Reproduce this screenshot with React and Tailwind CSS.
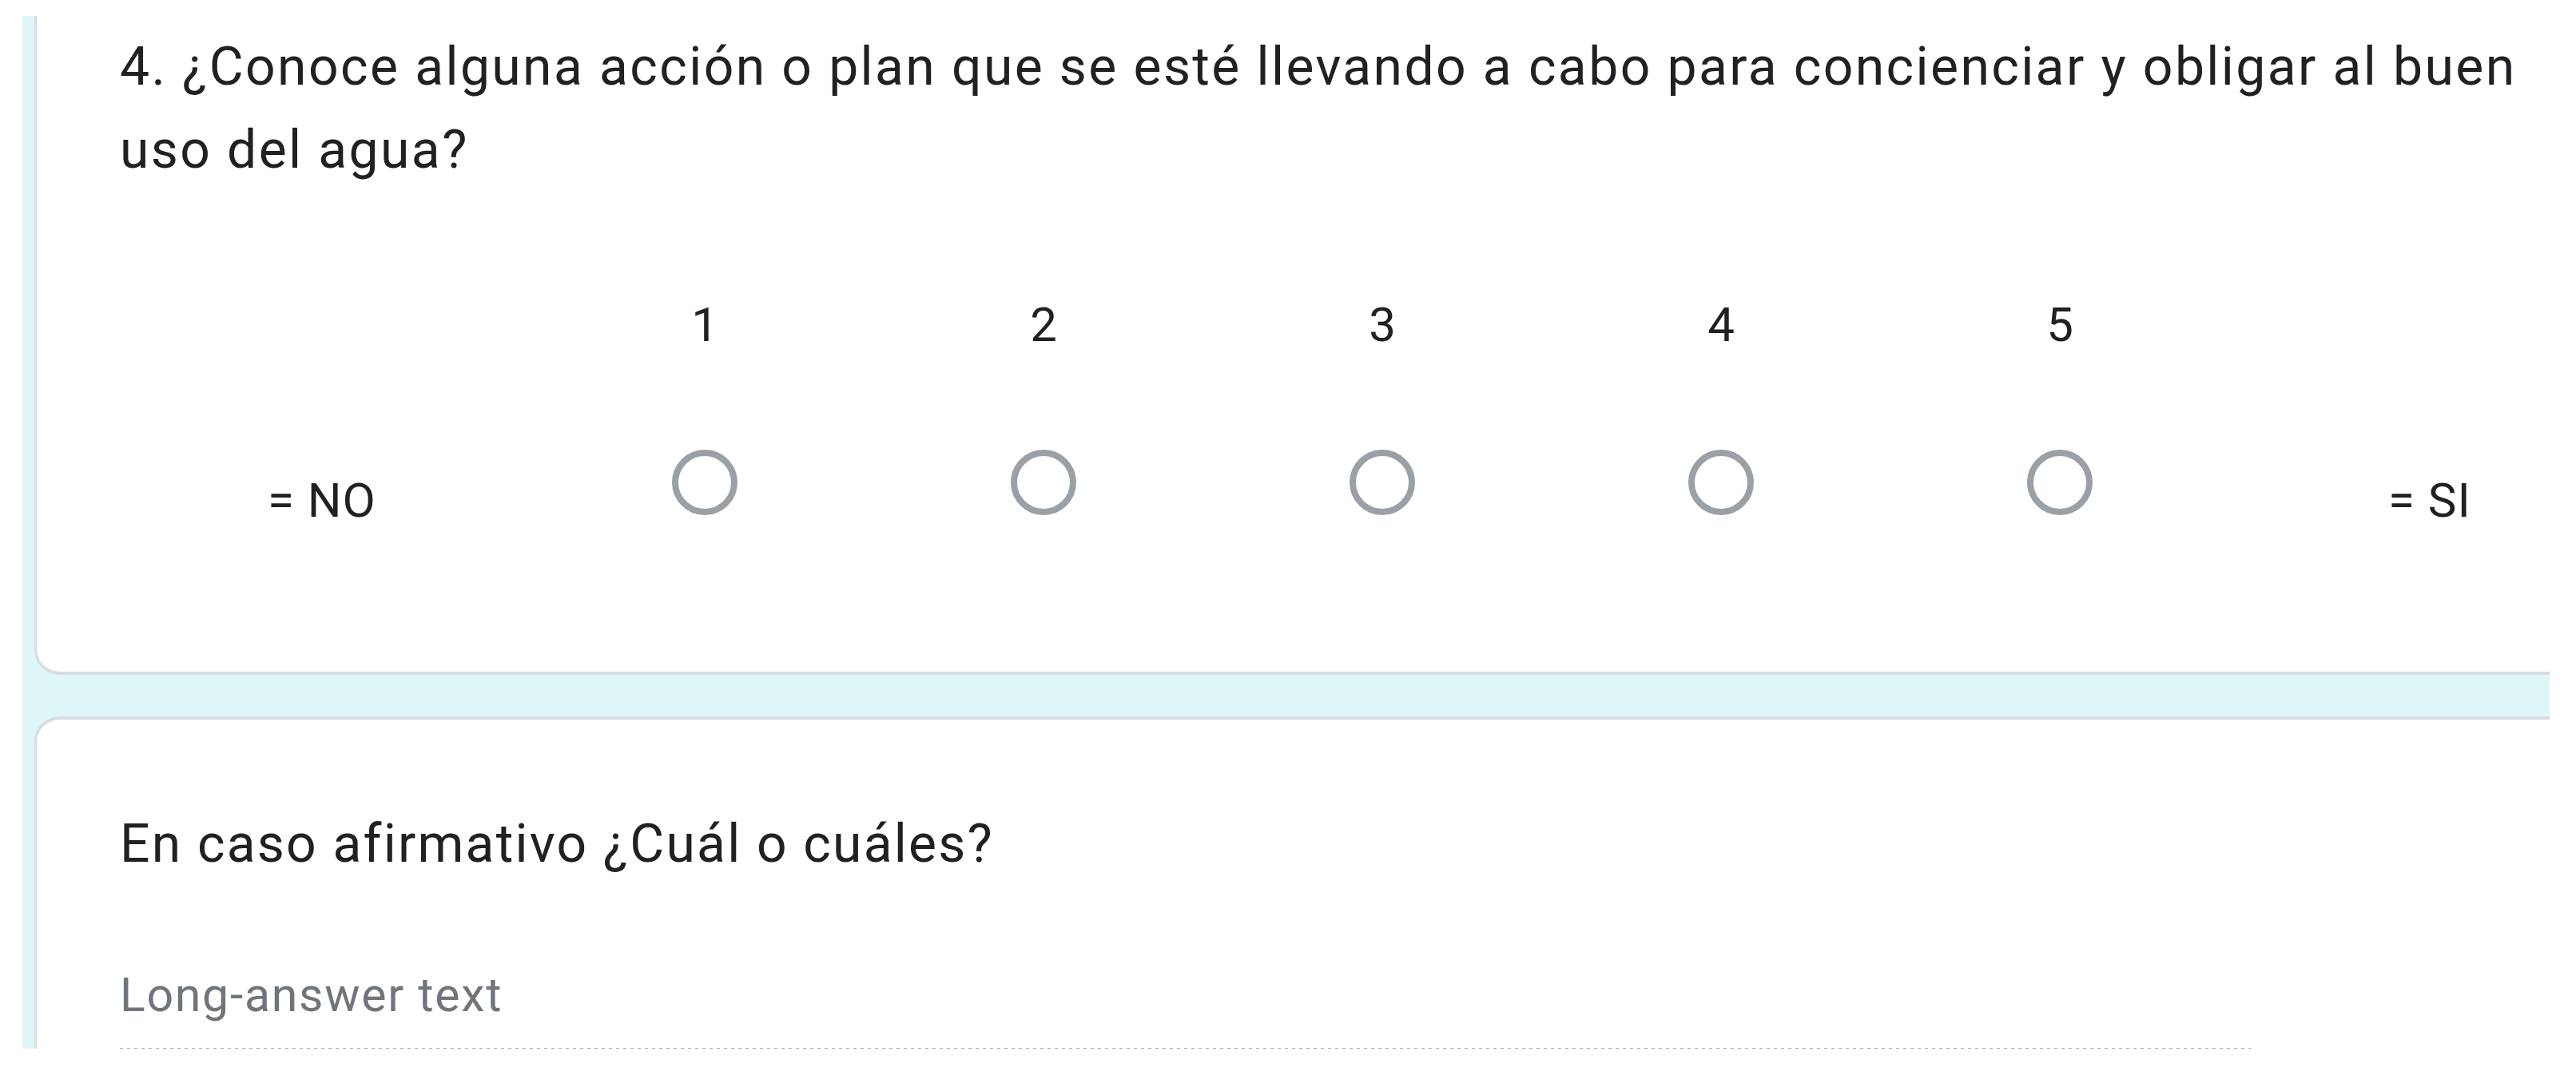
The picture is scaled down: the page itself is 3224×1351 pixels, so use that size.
const scale = [1, 2, 3, 4, 5];

const font = { fontFamily: 'Roboto, "Liberation Sans", sans-serif' };

const Radio = () => (
  <div className="w-[82px] h-[82px] rounded-full border-[8px] border-[#9aa0a6] bg-white" />
);

export default function App() {
  return (
    <div className="w-[3224px] h-[1351px] bg-white overflow-hidden" style={font}>
      <div className="ml-[28px] mt-[20px] w-[3163px] h-[1293px] bg-[#ddf6f7] overflow-hidden">
        {/* Question card: linear scale */}
        <div className="ml-[15px] h-[825px] bg-white border-l-[3px] border-b-[4px] border-[#d9dbe0] rounded-bl-[32px] pl-[104px] pt-[12px] text-[#202124]">
          <h2 className="text-[66px] leading-[104px] tracking-[2.4px]">
            <span className="block whitespace-nowrap">
              4. ¿Conoce alguna acción o plan que se esté llevando a cabo para concienciar y obligar al buen
            </span>
            <span className="block whitespace-nowrap">uso del agua?</span>
          </h2>

          {/* Numbers */}
          <div className="flex mt-[137px] text-[60px] leading-none">
            <div className="w-[520px]" />
            {scale.map((n) => (
              <div key={n} className="w-[424px] text-center">
                {n}
              </div>
            ))}
          </div>

          {/* Radios + labels */}
          <div className="flex items-start mt-[126px] text-[60px] leading-none">
            <div className="w-[520px] pl-[185px] pt-[34px] whitespace-nowrap tracking-[1px]">= NO</div>
            {scale.map((n) => (
              <div key={n} className="w-[424px] flex justify-center">
                <Radio />
              </div>
            ))}
            <div className="ml-[199px] pt-[34px] whitespace-nowrap tracking-[1px]">= SI</div>
          </div>
        </div>

        {/* Follow-up card: long answer */}
        <div className="ml-[15px] mt-[52px] h-[500px] bg-white border-l-[3px] border-t-[4px] border-[#d9dbe0] rounded-tl-[32px] pl-[104px] pt-[104px] text-[#202124]">
          <h2 className="text-[66px] leading-[104px] tracking-[2.2px] whitespace-nowrap">En caso afirmativo ¿Cuál o cuáles?</h2>
          <div className="mt-[107px] text-[59px] leading-none tracking-[1.7px] text-[#70757a]">Long-answer text</div>
          <div className="mt-[37px] w-[2667px] h-[5px] bg-[repeating-linear-gradient(to_right,#a3a3a3_0_4px,transparent_4px_9px)]" />
        </div>
      </div>
    </div>
  );
}
